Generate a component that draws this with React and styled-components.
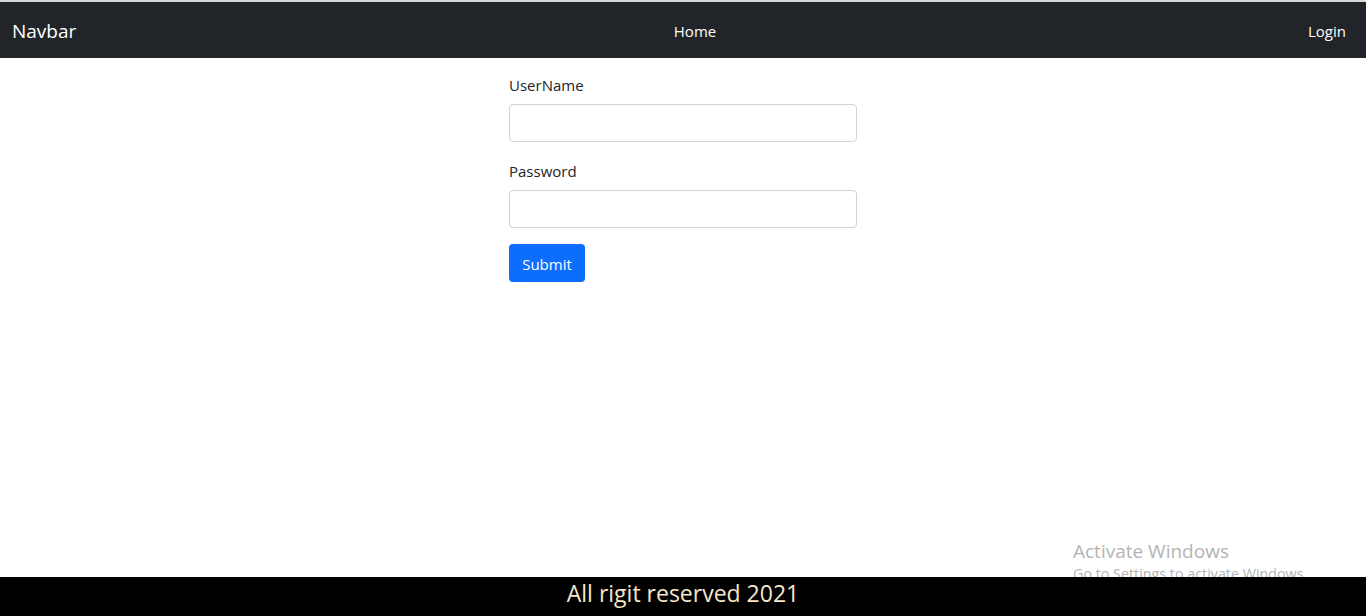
import styled, { createGlobalStyle } from 'styled-components';

const GlobalStyle = createGlobalStyle`
  html, body {
    margin: 0;
    padding: 0;
    height: 100%;
  }
  body {
    font-family: "Open Sans", "Noto Sans", sans-serif;
    background: #fff;
    color: #212529;
  }
  #root {
    height: 100%;
  }
`;

function App() {
  return (
    <>
      <GlobalStyle />
      <Page>
        <TopLine />
        <Nav>
          <Brand>Navbar</Brand>
          <NavLink>Home</NavLink>
          <NavLink>Login</NavLink>
        </Nav>
        <Main>
          <Form onSubmit={(e) => e.preventDefault()}>
            <Label htmlFor="username">UserName</Label>
            <Input id="username" type="text" />
            <Label htmlFor="password">Password</Label>
            <Input id="password" type="password" />
            <SubmitBtn type="submit">Submit</SubmitBtn>
          </Form>
        </Main>
        <Footer>All rigit reserved 2021</Footer>
        <Watermark>
          <strong>Activate Windows</strong>
          <span>Go to Settings to activate Windows.</span>
        </Watermark>
      </Page>
    </>
  );
}

const Page = styled.div`
  position: relative;
  height: 100%;
  display: flex;
  flex-direction: column;
`;

const TopLine = styled.div`
  height: 2px;
  background: #d6d8db;
`;

const Nav = styled.nav`
  height: 56px;
  background: #212529;
  display: grid;
  grid-template-columns: 1fr auto 1fr;
  align-items: center;
  padding: 0 20px 0 12px;
`;

const Brand = styled.a`
  font-size: 19px;
  color: #fff;
  justify-self: start;
  padding-top: 2px;
`;

const NavLink = styled.a`
  font-size: 15px;
  color: #fff;
  padding-top: 1px;
  &:nth-of-type(2) {
    justify-self: center;
    margin-left: 32px;
  }
  &:last-child {
    justify-self: end;
  }
`;

const Main = styled.main`
  flex: 1;
  display: flex;
  justify-content: center;
`;

const Form = styled.form`
  width: 348px;
  display: flex;
  flex-direction: column;
  padding-top: 15px;
`;

const Label = styled.label`
  font-size: 15px;
  line-height: 24px;
  margin-bottom: 7px;
`;

const Input = styled.input`
  height: 38px;
  box-sizing: border-box;
  border: 1px solid #ced4da;
  border-radius: 4px;
  margin-bottom: 17px;
  padding: 6px 12px;
  font-size: 16px;
`;

const SubmitBtn = styled.button`
  align-self: flex-start;
  width: 76px;
  height: 38px;
  margin-top: -1px;
  background: #0d6efd;
  color: #fff;
  border: none;
  border-radius: 4px;
  font-family: inherit;
  font-size: 15px;
  padding-top: 2px;
`;

const Footer = styled.footer`
  position: relative;
  z-index: 2;
  height: 39px;
  box-sizing: border-box;
  background: #000;
  color: #f5e6c8;
  font-size: 23px;
  display: flex;
  justify-content: center;
  align-items: center;
  padding-bottom: 7px;
`;

const Watermark = styled.div`
  position: absolute;
  left: 1073px;
  top: 539px;
  z-index: 1;
  display: flex;
  flex-direction: column;
  color: #b4b4b4;
  strong {
    font-weight: 400;
    font-size: 19px;
    line-height: 25px;
  }
  span {
    font-size: 14.3px;
    line-height: 20px;
  }
`;

export default App;
